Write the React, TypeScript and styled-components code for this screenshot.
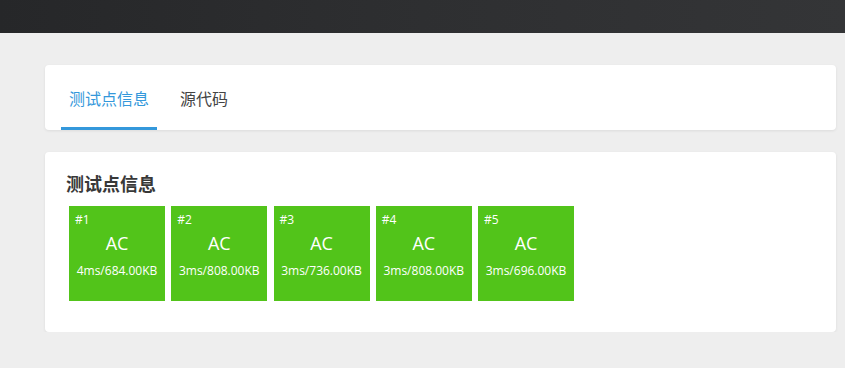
import React, { useState } from 'react'
import styled, { createGlobalStyle } from 'styled-components'

const GlobalStyle = createGlobalStyle`
  html, body {
    margin: 0;
    padding: 0;
    background: #eeeeee;
    font-family: "Open Sans", "Noto Sans CJK SC", sans-serif;
  }
`

const TopBar = styled.div`
  height: 33px;
  background: linear-gradient(90deg, #262729 0%, #2e2f31 50%, #343537 100%);
`

const Main = styled.div`
  padding: 32px 9px 0 45px;
  display: flex;
  flex-direction: column;
  gap: 22px;
`

const Card = styled.div`
  background: #fff;
  border-radius: 4px;
  box-shadow: 0 1px 3px rgba(0, 0, 0, 0.08);
`

const TabBar = styled.div`
  display: flex;
  gap: 15px;
  padding: 0 16px;
`

const Tab = styled.div<{ $active?: boolean }>`
  padding: 23px 8px 17px;
  font-size: 16px;
  line-height: 22px;
  color: ${p => (p.$active ? '#3498db' : '#444')};
  border-bottom: 3px solid ${p => (p.$active ? '#3498db' : 'transparent')};
  cursor: pointer;
`

const Section = styled.div`
  padding: 20px 21px 31px;
`

const SectionTitle = styled.h3`
  margin: 0 0 10px;
  font-size: 18px;
  line-height: 24px;
  font-weight: 700;
  color: #383838;
`

const CaseList = styled.div`
  display: flex;
  gap: 6.25px;
  padding-left: 3px;
`

const CaseBox = styled.div`
  width: 96px;
  height: 95px;
  background: #52c41a;
  color: #fff;
  display: flex;
  flex-direction: column;
  align-items: center;
  padding: 6px 6px 0;
  box-sizing: border-box;
`

const CaseIndex = styled.div`
  align-self: flex-start;
  font-size: 12px;
  line-height: 16px;
`

const CaseStatus = styled.div`
  font-size: 18px;
  line-height: 24px;
  margin-top: 3px;
`

const CaseMeta = styled.div`
  font-size: 12px;
  line-height: 16px;
  margin-top: 8px;
  white-space: nowrap;
`

interface TestCase {
  id: number
  status: string
  time: string
  memory: string
}

const cases: TestCase[] = [
  { id: 1, status: 'AC', time: '4ms', memory: '684.00KB' },
  { id: 2, status: 'AC', time: '3ms', memory: '808.00KB' },
  { id: 3, status: 'AC', time: '3ms', memory: '736.00KB' },
  { id: 4, status: 'AC', time: '3ms', memory: '808.00KB' },
  { id: 5, status: 'AC', time: '3ms', memory: '696.00KB' }
]

const App: React.FC = () => {
  const [tab, setTab] = useState('cases')

  return (
    <>
      <GlobalStyle />
      <TopBar />
      <Main>
        <Card>
          <TabBar>
            <Tab $active={tab === 'cases'} onClick={() => setTab('cases')}>测试点信息</Tab>
            <Tab $active={tab === 'code'} onClick={() => setTab('code')}>源代码</Tab>
          </TabBar>
        </Card>
        <Card>
          <Section>
            <SectionTitle>测试点信息</SectionTitle>
            <CaseList>
              {cases.map(c => (
                <CaseBox key={c.id}>
                  <CaseIndex>#{c.id}</CaseIndex>
                  <CaseStatus>{c.status}</CaseStatus>
                  <CaseMeta>{c.time}/{c.memory}</CaseMeta>
                </CaseBox>
              ))}
            </CaseList>
          </Section>
        </Card>
      </Main>
    </>
  )
}

export default App
